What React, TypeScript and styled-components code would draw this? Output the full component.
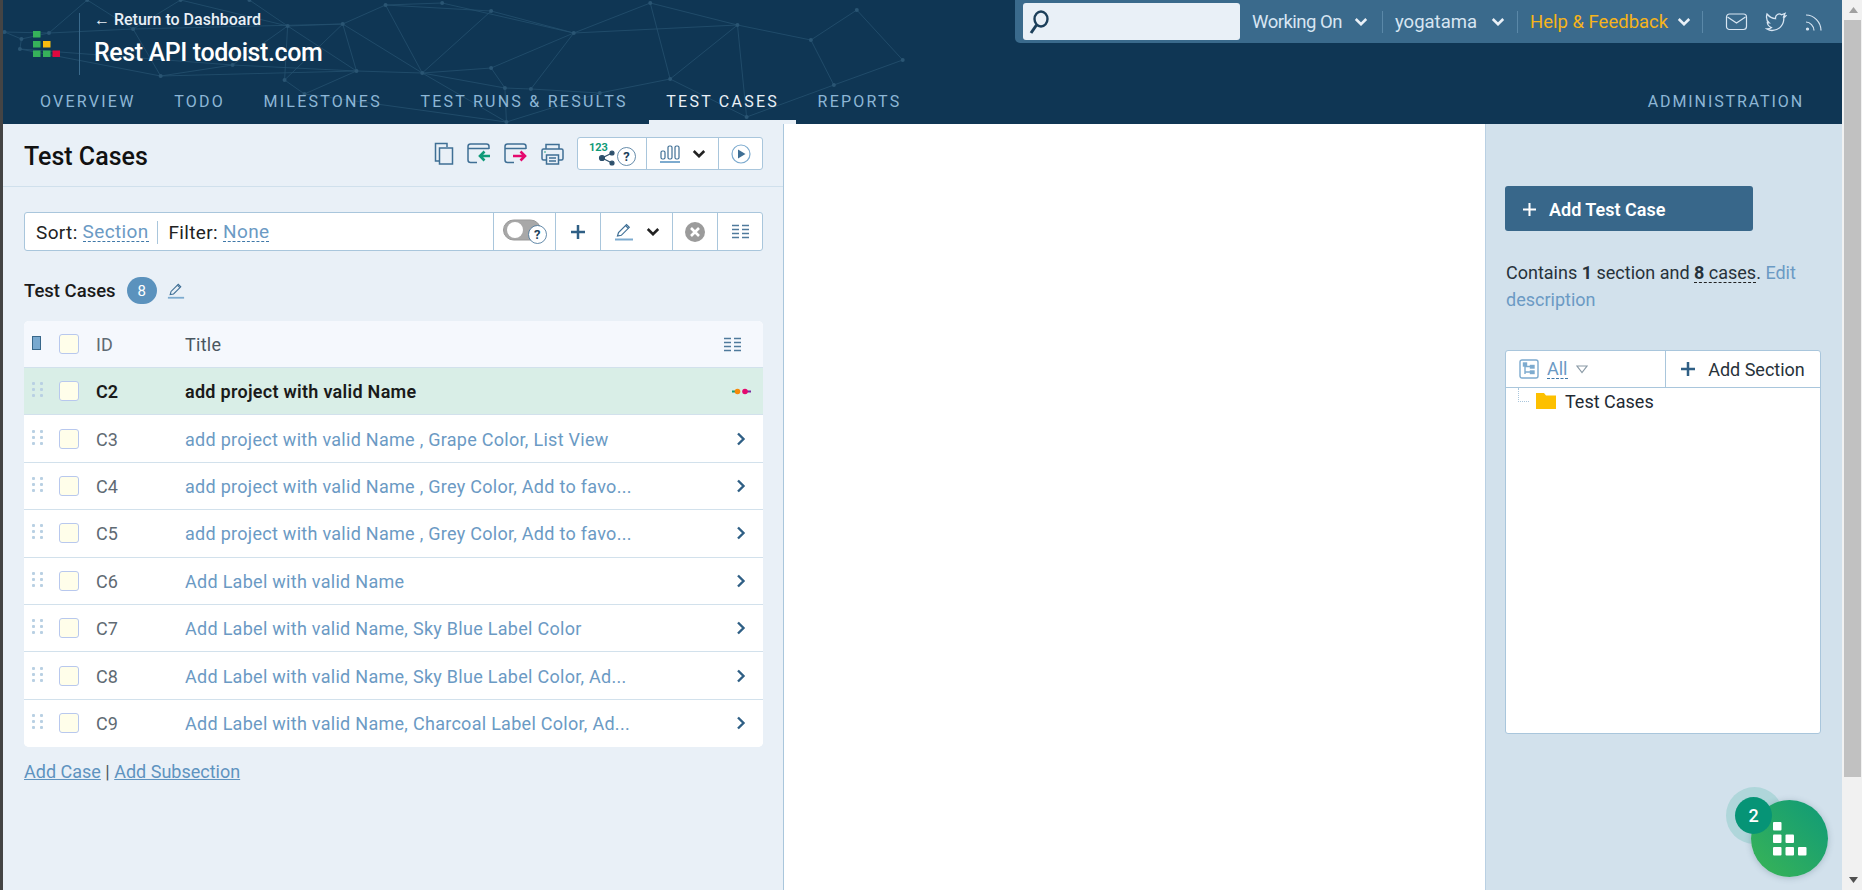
import React from "react";
import styled, { createGlobalStyle } from "styled-components";

const GlobalStyle = createGlobalStyle`
  html, body { margin: 0; padding: 0; height: 100%; overflow: hidden; }
  body { font-family: Roboto, "Liberation Sans", sans-serif; color: #1a1a1a; }
  #root { height: 100%; }
  * { box-sizing: border-box; }
`;

const Shell = styled.div`
  display: flex;
  width: 1862px;
  height: 890px;
  overflow: hidden;
`;
const WindowEdge = styled.div`
  width: 3px;
  background: #444;
  flex: none;
`;
const Page = styled.div`
  flex: 1;
  display: flex;
  flex-direction: column;
  min-width: 0;
`;
const Header = styled.header`
  position: relative;
  height: 124px;
  flex: none;
  background: #0f3654;
  display: flex;
  flex-direction: column;
  overflow: hidden;
`;
const Network = styled.svg`
  position: absolute;
  left: -3px;
  top: 0;
  pointer-events: none;
`;
const HeaderTop = styled.div`
  position: relative;
  height: 83px;
  display: flex;
  align-items: flex-start;
  justify-content: space-between;
`;
const Brand = styled.div`
  display: flex;
  align-items: center;
  padding: 13px 0 0 30px;
`;
const BrandText = styled.div`
  border-left: 1px solid #3a6a8c;
  margin-left: 19px;
  padding: 0 0 0 14px;
  height: 62px;
  color: #fff;
`;
const BackLink = styled.div`
  font-size: 16px;
  font-weight: 500;
  line-height: 18px;
  margin-top: -2px;
  color: #e9f0f7;
  white-space: nowrap;
`;
const ProjectTitle = styled.div`
  font-size: 25px;
  font-weight: 500;
  line-height: 28px;
  margin-top: 10px;
  letter-spacing: -0.4px;
  white-space: nowrap;
`;
const UtilityBar = styled.div`
  width: 827px;
  height: 43px;
  background: #3a6a8c;
  border-bottom-left-radius: 5px;
  display: flex;
  align-items: center;
  padding: 0 0 0 8px;
  font-size: 18.5px;
  color: #d7e5f2;
`;
const SearchBox = styled.div`
  width: 217px;
  height: 37px;
  flex: none;
  background: #e9f0f7;
  border-radius: 3px;
  display: flex;
  align-items: center;
  padding-left: 5px;
  margin-right: 6px;
`;
const UtilityItem = styled.div<{ $gold?: boolean; $width: number; $pl: number; $pr: number; $tight?: boolean }>`
  width: ${(p) => p.$width}px;
  flex: none;
  height: 22px;
  line-height: 20px;
  display: flex;
  align-items: center;
  justify-content: space-between;
  white-space: nowrap;
  padding: 0 ${(p) => p.$pr}px 0 ${(p) => p.$pl}px;
  color: ${(p) => (p.$gold ? "#f6b41a" : "#d7e5f2")};
  letter-spacing: ${(p) => (p.$tight ? "-0.5px" : "0")};
  border-right: 1px solid #5a88a8;
`;
const SocialIcons = styled.div`
  display: flex;
  align-items: center;
  gap: 17px;
  margin-left: 22px;
`;
const TabRow = styled.nav`
  position: relative;
  flex: 1;
  display: flex;
  padding-left: 20px;
`;
const Tab = styled.div<{ $active?: boolean; $right?: boolean }>`
  height: 41px;
  padding: 9px 17px 0;
  margin-left: ${(p) => (p.$right ? "auto" : "0")};
  margin-right: ${(p) => (p.$right ? "21px" : "4.5px")};
  font-size: 16px;
  line-height: 20px;
  letter-spacing: ${(p) => (p.$right ? "1.9px" : "2.25px")};
  white-space: nowrap;
  color: ${(p) => (p.$active ? "#e9f0f7" : "#8db6d6")};
  border-bottom: 4px solid ${(p) => (p.$active ? "#e9f0f7" : "transparent")};
`;
const Body = styled.div`
  flex: 1;
  display: flex;
  min-height: 0;
`;
const LeftPane = styled.section`
  width: 781px;
  flex: none;
  background: #e9f0f7;
  border-right: 1px solid #a9c6dc;
`;
const PaneHead = styled.div`
  height: 63px;
  border-bottom: 1px solid #d0e0ec;
  display: flex;
  align-items: center;
  justify-content: space-between;
  padding: 0 20px 0 21px;
`;
const PaneTitle = styled.h1`
  margin: 2px 0 0;
  font-size: 25px;
  font-weight: 500;
  color: #111;
`;
const HeadTools = styled.div`
  display: flex;
  align-items: center;
  gap: 13px;
  margin-top: -3px;
`;
const ToolGroup = styled.div`
  display: flex;
  height: 33px;
  background: #fff;
  border: 1px solid #a9c6dc;
  border-radius: 3px;
`;
const ToolCell = styled.div<{ $w: number }>`
  width: ${(p) => p.$w}px;
  display: flex;
  align-items: center;
  justify-content: center;
  gap: 12px;
  border-left: 1px solid #a9c6dc;
  &:first-child { border-left: none; }
`;
const ShareGroup = styled.span`
  display: flex;
  align-items: flex-end;
`;
const PaneBody = styled.div`
  padding: 25px 20px 0 21px;
`;
const FilterBar = styled.div`
  height: 39px;
  background: #fff;
  border: 1px solid #a9c6dc;
  border-radius: 3px;
  display: flex;
  align-items: stretch;
  font-size: 19px;
  letter-spacing: 0.35px;
`;
const FilterText = styled.div`
  flex: 1;
  display: flex;
  align-items: center;
  padding: 1px 0 0 11px;
  color: #222;
`;
const FilterDivider = styled.span`
  width: 1px;
  height: 23px;
  background: #a9c6dc;
  margin: 0 11px 0 8px;
`;
const Dashed = styled.span<{ $dark?: boolean }>`
  color: ${(p) => (p.$dark ? "inherit" : "#6b9ac4")};
  border-bottom: 1px dashed ${(p) => (p.$dark ? "#222" : "#3f78a8")};
  line-height: 18px;
  display: inline-block;
`;
const FilterValue = styled(Dashed)`
  margin-left: 5px;
`;
const FilterCell = styled.div<{ $w: number }>`
  width: ${(p) => p.$w}px;
  display: flex;
  align-items: center;
  justify-content: center;
  gap: 12px;
  border-left: 1px solid #a9c6dc;
`;
const SectionHead = styled.div`
  display: flex;
  align-items: center;
  margin-top: 26px;
  height: 27px;
  font-size: 18.5px;
  font-weight: 500;
`;
const CountBadge = styled.span`
  width: 30px;
  height: 27px;
  border-radius: 14px;
  background: #5b92bd;
  color: #fff;
  font-size: 15px;
  font-weight: 400;
  display: flex;
  align-items: center;
  justify-content: center;
  margin: 0 10px 0 11px;
`;
const Table = styled.div`
  margin-top: 17px;
  border-radius: 5px;
  overflow: hidden;
  background: #fff;
`;
const Row = styled.div<{ $kind?: "head" | "current" }>`
  height: ${(p) => (p.$kind === "head" ? "47px" : "47.4px")};
  display: grid;
  grid-template-columns: 35px 37px 89px 1fr 44px;
  align-items: center;
  border-bottom: 1px solid #d2e1ec;
  background: ${(p) => (p.$kind === "head" ? "#f5f8fd" : p.$kind === "current" ? "#d9eee7" : "#fff")};
  &:last-child { border-bottom: none; }
`;
const Grip = styled.div`
  display: grid;
  grid-template-columns: 3px 3px;
  gap: 3px 5px;
  margin: -3px 0 0 8px;
  width: 11px;
  & > i { width: 3px; height: 3px; background: #b9d0e3; border-radius: 1px; }
`;
const SelectCell = styled.div`
  display: flex;
  padding-left: 8px;
  margin-top: -3px;
`;
const Check = styled.span`
  width: 20px;
  height: 20px;
  border: 1px solid #b8c8ee;
  border-radius: 3px;
  background: #fffeea;
  display: block;
`;
const IdCell = styled.div<{ $strong?: boolean }>`
  font-size: 18px;
  padding-top: 1px;
  color: ${(p) => (p.$strong ? "#1a1a1a" : "#5f6a73")};
  font-weight: ${(p) => (p.$strong ? 600 : 400)};
`;
const TitleCell = styled.div<{ $strong?: boolean; $head?: boolean }>`
  font-size: 18px;
  padding-top: 1px;
  white-space: nowrap;
  color: ${(p) => (p.$strong ? "#1a1a1a" : p.$head ? "#4a5660" : "#6b9ac4")};
  font-weight: ${(p) => (p.$strong ? 600 : 400)};
  letter-spacing: 0.28px;
`;
const EndCell = styled.div<{ $shift?: number }>`
  display: flex;
  justify-content: center;
  padding-right: ${(p) => p.$shift ?? 0}px;
`;
const FootLinks = styled.div`
  margin-top: 14px;
  font-size: 18px;
  color: #4f5a63;
  & > a { color: #5e93bf; text-decoration: underline; }
`;
const Center = styled.div`
  width: 701px;
  flex: none;
  background: #fff;
`;
const RightPane = styled.aside`
  flex: 1;
  background: #d2e1ec;
  padding: 62px 20px 0 19px;
  border-left: 1px solid #b9d0e3;
  position: relative;
`;
const AddButton = styled.div`
  width: 248px;
  height: 45px;
  background: #38678a;
  border-radius: 3px;
  display: flex;
  align-items: center;
  padding: 2px 0 0 18px;
  gap: 13px;
  color: #fff;
  font-size: 18px;
  font-weight: 600;
`;
const Summary = styled.p`
  margin: 28px 0 0 1px;
  font-size: 18px;
  line-height: 27px;
  color: #27323a;
  & > b { font-weight: 700; }
  & > a { color: #6b9ac4; }
`;
const TreeBox = styled.div`
  width: 316px;
  height: 384px;
  margin-top: 37px;
  background: #fff;
  border: 1px solid #a9c6dc;
  border-radius: 3px;
`;
const TreeHead = styled.div`
  height: 37px;
  border-bottom: 1px solid #a9c6dc;
  display: flex;
  font-size: 18px;
`;
const TreeFilter = styled.div`
  width: 160px;
  border-right: 1px solid #a9c6dc;
  display: flex;
  align-items: center;
  padding-left: 13px;
  gap: 8px;
`;
const TreeAdd = styled.div`
  flex: 1;
  display: flex;
  align-items: center;
  justify-content: center;
  gap: 13px;
  color: #27323a;
  white-space: nowrap;
`;
const TreeRow = styled.div`
  display: flex;
  align-items: center;
  padding-left: 11px;
  height: 26px;
  font-size: 18px;
  color: #1f2a33;
`;
const TreeElbow = styled.span`
  width: 11px;
  height: 14px;
  margin: -12px 7px 0 1px;
  border-left: 1px dotted #a9c6dc;
  border-bottom: 1px dotted #a9c6dc;
`;
const TreeLabel = styled.span`
  margin-left: 9px;
`;
const Fab = styled.div`
  position: absolute;
  left: 265px;
  top: 676px;
  width: 77px;
  height: 77px;
  border-radius: 50%;
  background: linear-gradient(225deg, #0f9a78, #3ab455);
  box-shadow: 0 1px 6px rgba(60, 90, 110, 0.3);
  display: flex;
  align-items: center;
  justify-content: center;
`;
const FabHalo = styled.div`
  position: absolute;
  left: 240px;
  top: 663px;
  width: 57px;
  height: 57px;
  border-radius: 50%;
  background: #afd6da;
`;
const FabCount = styled.div`
  position: absolute;
  left: 249px;
  top: 673px;
  width: 37px;
  height: 37px;
  border-radius: 50%;
  background: #069476;
  color: #fff;
  font-size: 18px;
  font-weight: 500;
  display: flex;
  align-items: center;
  justify-content: center;
`;
const Scrollbar = styled.div`
  width: 20px;
  flex: none;
  background: #f1f1f1;
  display: flex;
  flex-direction: column;
  align-items: flex-end;
`;
const ScrollArrow = styled.div`
  height: 20px;
  width: 18px;
  display: flex;
  align-items: center;
  justify-content: center;
`;
const ScrollThumb = styled.div`
  width: 17px;
  height: 757px;
  margin-right: 1px;
  background: #c1c1c1;
`;
const ScrollTrack = styled.div`
  flex: 1;
`;

const nodes: [number, number][] = [
  [3, 32], [57, 0], [118, 0], [163, 0], [14, 39], [13, 49], [32, 33], [87, 29], [188, 26], [224, 24],
  [252, 5], [289, 3], [321, 11], [375, 33], [425, 3], [482, 25], [105, 76], [152, 65], [233, 71],
  [186, 80], [276, 73], [321, 68], [330, 88], [347, 89], [392, 93], [438, 79], [199, 94], [331, 122],
  [488, 117], [530, 40], [560, 10], [545, 85], [590, 60],
];
const edges: [number, number][] = [
  [0, 6], [0, 4], [4, 5], [4, 6], [5, 16], [6, 7], [7, 2], [7, 1], [1, 6], [2, 8], [3, 8], [8, 9], [7, 9],
  [9, 10], [10, 12], [10, 11], [11, 13], [12, 13], [13, 14], [14, 15], [13, 15], [9, 19], [8, 19], [19, 26],
  [16, 18], [17, 18], [16, 17], [18, 9], [18, 8], [17, 8], [18, 20], [20, 12], [20, 9], [20, 10], [20, 21],
  [21, 13], [21, 22], [22, 23], [22, 20], [23, 24], [24, 25], [25, 15], [15, 28], [25, 28], [13, 23], [14, 25],
  [24, 27], [22, 27], [20, 27], [18, 26], [26, 27], [15, 29], [29, 30], [29, 31], [31, 32], [30, 32], [28, 31],
  [5, 17], [16, 7],
];
const netX = 1.53;

const NetworkArt = () => (
  <Network width="960" height="124" viewBox="0 0 960 124">
    {edges.map(([a, b], i) => (
      <line key={i} x1={nodes[a][0] * netX} y1={nodes[a][1]} x2={nodes[b][0] * netX} y2={nodes[b][1]} stroke="#24506f" strokeWidth="0.8" />
    ))}
    {nodes.map(([x, y], i) => (
      <circle key={i} cx={x * netX} cy={y} r="2" fill="#2a5573" />
    ))}
  </Network>
);

const Logo = () => (
  <svg width="27" height="26" viewBox="0 0 27 26">
    <rect x="0" y="0" width="7.500" height="6.500" fill="#36b15a" />
    <rect x="0" y="10" width="7.500" height="6.500" fill="#36b15a" />
    <rect x="10" y="10" width="7.500" height="6.500" fill="#f8bd10" />
    <rect x="0" y="19.500" width="7.500" height="6.500" fill="#36b15a" />
    <rect x="10" y="19.500" width="7.500" height="6.500" fill="#36b15a" />
    <rect x="19.500" y="19.500" width="7.500" height="6.500" fill="#e0083f" />
  </svg>
);

const Chevron = ({ color = "#e9f0f7", size = 14 }: { color?: string; size?: number }) => (
  <svg width={size} height={size * 0.7} viewBox="0 0 12 8" fill="none">
    <path d="M1.500 1.500 6 6l4.500-4.500" stroke={color} strokeWidth="2.200" />
  </svg>
);

const SearchIcon = () => (
  <svg width="24" height="28" viewBox="0 0 24 28" fill="none" stroke="#1c3f5a" strokeWidth="2.400">
    <ellipse cx="13" cy="11" rx="6.500" ry="7.500" />
    <path d="M8.500 17 3 25" strokeWidth="3" />
  </svg>
);

const MailIcon = () => (
  <svg width="23" height="18" viewBox="0 0 22 18" fill="none" stroke="#d7e5f2" strokeWidth="1.200">
    <rect x="1" y="1" width="20" height="15.500" rx="3" />
    <path d="M2 4l9 6 9-6" />
  </svg>
);
const TwitterIcon = () => (
  <svg width="22" height="20" viewBox="0 0 22 20" fill="none" stroke="#d7e5f2" strokeWidth="1.300">
    <path d="M2 2c2.500 3 5 4.500 8.500 4.700C10 3 14 .5 16.500 2.800L20 1.500l-1.300 3 2-.5-1.900 2C19 13 14 18.500 7 18.500c-2 0-3.500-.5-5-1.500 2 0 3.500-.5 4.500-1.500C4 14.500 2.500 13 2.300 10.500l1.700.2C2 9 1 5.500 2 2z" />
  </svg>
);
const RssIcon = () => (
  <svg width="20" height="20" viewBox="0 0 20 20" fill="none" stroke="#d7e5f2" strokeWidth="1.200">
    <circle cx="3.500" cy="17" r="1" fill="#d7e5f2" />
    <path d="M2 10c4 0 8 4 8 8.500M2 3c8 0 15 7 15 15.500" />
  </svg>
);
const CopyIcon = () => (
  <svg width="20" height="23" viewBox="0 0 20 23" fill="none" stroke="#3f6f95" strokeWidth="1.500">
    <path d="M5 19H1.500V1.500H13V5" />
    <rect x="5.500" y="6" width="13" height="16" />
  </svg>
);
const TransferIcon = ({ color, dir }: { color: string; dir: "in" | "out" }) => (
  <svg width="24" height="21" viewBox="0 0 24 21" fill="none">
    <path d="M22 6V3.500C22 2 21 1 19.500 1h-16C2 1 1 2 1 3.500V17c0 1.500 1 2.500 2.500 2.500H10M1 5.500h21" stroke="#3f6f95" strokeWidth="1.500" />
    {dir === "in" ? (
      <path d="M23 13H13M17.500 8.500 13 13l4.500 4.500" stroke={color} strokeWidth="2.600" />
    ) : (
      <path d="M9 13h12M16.500 8.500 21 13l-4.500 4.500" stroke={color} strokeWidth="2.600" />
    )}
  </svg>
);
const PrinterIcon = () => (
  <svg width="23" height="22" viewBox="0 0 23 22" fill="none" stroke="#3f6f95" strokeWidth="1.500">
    <path d="M5 6V1.500h13V6" />
    <path d="M5 17H2.500C1.500 17 1 16.500 1 15.500v-8C1 6.500 1.500 6 2.500 6h18c1 0 1.500.5 1.500 1.500v8c0 1-.5 1.500-1.500 1.500H18" />
    <rect x="5.500" y="12" width="12" height="9" />
    <path d="M8 15h7M8 18h7" />
    <circle cx="4" cy="9" r="0.800" fill="#0f9a78" stroke="none" />
  </svg>
);
const HelpDot = () => (
  <svg width="19" height="19" viewBox="0 0 19 19">
    <circle cx="9.500" cy="9.500" r="9" fill="#fff" stroke="#3f6f95" strokeWidth="0.800" />
    <text x="9.500" y="14" textAnchor="middle" fontSize="13" fontWeight="700" fontFamily="Roboto, sans-serif" fill="#1c3f5a">?</text>
  </svg>
);
const ShareIcon = () => (
  <svg width="28" height="24" viewBox="0 0 28 24">
    <text x="0" y="9" fontSize="11" fontWeight="700" fontFamily="Roboto, sans-serif" fill="#0f9a78">123</text>
    <g fill="#2d4f6b" stroke="#2d4f6b" strokeWidth="1.200">
      <circle cx="13" cy="16" r="2.500" />
      <circle cx="23" cy="11" r="2" />
      <circle cx="23" cy="21" r="2" />
      <path d="M13 16 23 11M13 16l10 5" />
    </g>
  </svg>
);
const BarsIcon = () => (
  <svg width="20" height="20" viewBox="0 0 20 20" fill="none" stroke="#3f6f95" strokeWidth="1.200">
    <rect x="1" y="7" width="4" height="8" rx="1.500" />
    <rect x="8" y="2" width="4" height="13" rx="1.500" />
    <rect x="15" y="2" width="4" height="13" rx="1.500" />
    <path d="M0 18h20" stroke="#7dabcf" strokeWidth="2" />
  </svg>
);
const PlayIcon = () => (
  <svg width="20" height="20" viewBox="0 0 20 20">
    <circle cx="10" cy="10" r="9" fill="none" stroke="#7dabcf" strokeWidth="1.200" />
    <path d="M7 5.500 14.500 10 7 14.500z" fill="#3f6f95" />
  </svg>
);
const ToggleIcon = () => (
  <svg width="44" height="25" viewBox="0 0 44 25">
    <rect x="0.500" y="1" width="37" height="20" rx="10" fill="#a8a8a8" stroke="#999" />
    <circle cx="12" cy="11" r="8" fill="#fff" />
    <g transform="translate(25 6)">
      <circle cx="9.500" cy="9.500" r="9" fill="#fff" stroke="#3f6f95" strokeWidth="0.800" />
      <text x="9.500" y="14" textAnchor="middle" fontSize="13" fontWeight="700" fontFamily="Roboto, sans-serif" fill="#1c3f5a">?</text>
    </g>
  </svg>
);
const PlusIcon = ({ color = "#2f5f85", size = 14, w = 2.500 }: { color?: string; size?: number; w?: number }) => (
  <svg width={size} height={size} viewBox="0 0 14 14">
    <path d="M7 0v14M0 7h14" stroke={color} strokeWidth={w} />
  </svg>
);
const PencilIcon = ({ size = 20 }: { size?: number }) => (
  <svg width={size} height={size} viewBox="0 0 20 20" fill="none">
    <path d="M3.500 14 4.500 10.500 12.500 2.500l2.800 2.800-8 8z" stroke="#3f6f95" strokeWidth="1.200" />
    <path d="M11.500 3.500l2.800 2.800" stroke="#3f6f95" strokeWidth="1.200" />
    <path d="M1 17.500h18" stroke="#7dabcf" strokeWidth="2" />
  </svg>
);
const ClearIcon = () => (
  <svg width="20" height="20" viewBox="0 0 20 20">
    <circle cx="10" cy="10" r="10" fill="#9b9b9b" />
    <path d="M6 6l8 8M14 6l-8 8" stroke="#fff" strokeWidth="2.600" />
  </svg>
);
const ColumnsIcon = () => (
  <svg width="17" height="15" viewBox="0 0 17 15">
    <path d="M0 1.500h7M10 1.500h7M0 5.500h7M10 5.500h7M0 9.500h7M10 9.500h7M0 13.500h7M10 13.500h7" stroke="#4f7a9c" strokeWidth="1.300" />
  </svg>
);
const RowArrow = () => (
  <svg width="10" height="14" viewBox="0 0 10 14" fill="none">
    <path d="M2 1.500 7.500 7 2 12.500" stroke="#2f5f85" strokeWidth="2.400" />
  </svg>
);
const StatusDots = () => (
  <svg width="19" height="7" viewBox="0 0 19 7">
    <rect x="0" y="2.500" width="5" height="2" fill="#0f9a78" />
    <rect x="14" y="2.500" width="5" height="2" fill="#7a2aa0" />
    <circle cx="5.500" cy="3.500" r="2.800" fill="#f58a0b" />
    <circle cx="13" cy="3.500" r="2.800" fill="#e5096e" />
  </svg>
);
const SelectColumnIcon = () => (
  <svg width="9" height="14" viewBox="0 0 9 14">
    <rect x="0.500" y="0.500" width="8" height="13" fill="#79a9cf" stroke="#38678a" />
  </svg>
);
const TreeFilterIcon = () => (
  <svg width="20" height="20" viewBox="0 0 20 20" fill="none" stroke="#7dabcf" strokeWidth="1.400">
    <rect x="1" y="1" width="18" height="18" rx="2" />
    <path d="M6 5v10M6 7.500h5M6 13h5" />
    <rect x="4.500" y="4" width="3" height="3" fill="#7dabcf" />
    <rect x="11.500" y="6.500" width="3.500" height="2.500" fill="#7dabcf" />
    <rect x="11.500" y="12" width="3.500" height="2.500" fill="#7dabcf" />
  </svg>
);
const CaretDown = () => (
  <svg width="12" height="9" viewBox="0 0 12 9" fill="none">
    <path d="M1 1h10L6 7.500z" stroke="#8a9aa6" strokeWidth="1.200" />
  </svg>
);
const FolderIcon = () => (
  <svg width="20" height="16" viewBox="0 0 20 16">
    <path d="M0 0h8l2 2.500h10V16H0z" fill="#fdc000" />
  </svg>
);
const FabGrid = () => (
  <svg width="34" height="34" viewBox="0 0 34 34">
    {[[0, 0], [0, 12.500], [12.500, 12.500], [0, 25], [12.500, 25], [25, 25]].map(([x, y], i) => (
      <rect key={i} x={x} y={y} width="8.500" height="8.500" rx="1" fill="#fff" />
    ))}
  </svg>
);

const tabs = ["OVERVIEW", "TODO", "MILESTONES", "TEST RUNS & RESULTS", "TEST CASES", "REPORTS"];
const cases = [
  { id: "C2", title: "add project with valid Name", current: true },
  { id: "C3", title: "add project with valid Name , Grape Color, List View" },
  { id: "C4", title: "add project with valid Name , Grey Color, Add to favo..." },
  { id: "C5", title: "add project with valid Name , Grey Color, Add to favo..." },
  { id: "C6", title: "Add Label with valid Name" },
  { id: "C7", title: "Add Label with valid Name, Sky Blue Label Color" },
  { id: "C8", title: "Add Label with valid Name, Sky Blue Label Color, Ad..." },
  { id: "C9", title: "Add Label with valid Name, Charcoal Label Color, Ad..." },
];

export default function App() {
  return (
    <Shell>
      <GlobalStyle />
      <WindowEdge />
      <Page>
        <Header>
          <NetworkArt />
          <HeaderTop>
            <Brand>
              <Logo />
              <BrandText>
                <BackLink>← Return to Dashboard</BackLink>
                <ProjectTitle>Rest API todoist.com</ProjectTitle>
              </BrandText>
            </Brand>
            <UtilityBar>
              <SearchBox>
                <SearchIcon />
              </SearchBox>
              <UtilityItem $width={137} $pl={6} $pr={14} $tight>
                Working On <Chevron />
              </UtilityItem>
              <UtilityItem $width={135} $pl={12} $pr={12}>
                yogatama <Chevron />
              </UtilityItem>
              <UtilityItem $width={185} $pl={12} $pr={11} $gold>
                Help &amp; Feedback <Chevron />
              </UtilityItem>
              <SocialIcons>
                <MailIcon />
                <TwitterIcon />
                <RssIcon />
              </SocialIcons>
            </UtilityBar>
          </HeaderTop>
          <TabRow>
            {tabs.map((t) => (
              <Tab key={t} $active={t === "TEST CASES"}>
                {t}
              </Tab>
            ))}
            <Tab $right>ADMINISTRATION</Tab>
          </TabRow>
        </Header>
        <Body>
          <LeftPane>
            <PaneHead>
              <PaneTitle>Test Cases</PaneTitle>
              <HeadTools>
                <CopyIcon />
                <TransferIcon color="#0f9a78" dir="in" />
                <TransferIcon color="#e5096e" dir="out" />
                <PrinterIcon />
                <ToolGroup>
                  <ToolCell $w={68}>
                    <ShareGroup>
                      <ShareIcon />
                      <HelpDot />
                    </ShareGroup>
                  </ToolCell>
                  <ToolCell $w={72}>
                    <BarsIcon />
                    <Chevron color="#222" size={14} />
                  </ToolCell>
                  <ToolCell $w={44}>
                    <PlayIcon />
                  </ToolCell>
                </ToolGroup>
              </HeadTools>
            </PaneHead>
            <PaneBody>
              <FilterBar>
                <FilterText>
                  Sort:<FilterValue>Section</FilterValue>
                  <FilterDivider />
                  Filter:<FilterValue>None</FilterValue>
                </FilterText>
                <FilterCell $w={62}>
                  <ToggleIcon />
                </FilterCell>
                <FilterCell $w={45}>
                  <PlusIcon />
                </FilterCell>
                <FilterCell $w={72}>
                  <PencilIcon />
                  <Chevron color="#222" size={14} />
                </FilterCell>
                <FilterCell $w={45}>
                  <ClearIcon />
                </FilterCell>
                <FilterCell $w={45}>
                  <ColumnsIcon />
                </FilterCell>
              </FilterBar>
              <SectionHead>
                Test Cases
                <CountBadge>8</CountBadge>
                <PencilIcon size={18} />
              </SectionHead>
              <Table>
                <Row $kind="head">
                  <SelectCell>
                    <SelectColumnIcon />
                  </SelectCell>
                  <Check />
                  <IdCell>ID</IdCell>
                  <TitleCell $head>Title</TitleCell>
                  <EndCell $shift={18}>
                    <ColumnsIcon />
                  </EndCell>
                </Row>
                {cases.map((c) => (
                  <Row key={c.id} $kind={c.current ? "current" : undefined}>
                    <Grip>
                      <i /><i /><i /><i /><i /><i />
                    </Grip>
                    <Check />
                    <IdCell $strong={c.current}>{c.id}</IdCell>
                    <TitleCell $strong={c.current}>{c.title}</TitleCell>
                    <EndCell>{c.current ? <StatusDots /> : <RowArrow />}</EndCell>
                  </Row>
                ))}
              </Table>
              <FootLinks>
                <a>Add Case</a> | <a>Add Subsection</a>
              </FootLinks>
            </PaneBody>
          </LeftPane>
          <Center />
          <RightPane>
            <AddButton>
              <PlusIcon color="#fff" size={13} w={2.200} />
              Add Test Case
            </AddButton>
            <Summary>
              Contains <b>1</b> section and <Dashed $dark><b>8</b> cases</Dashed>. <a>Edit description</a>
            </Summary>
            <TreeBox>
              <TreeHead>
                <TreeFilter>
                  <TreeFilterIcon />
                  <Dashed>All</Dashed>
                  <CaretDown />
                </TreeFilter>
                <TreeAdd>
                  <PlusIcon size={14} />
                  Add Section
                </TreeAdd>
              </TreeHead>
              <TreeRow>
                <TreeElbow />
                <FolderIcon />
                <TreeLabel>Test Cases</TreeLabel>
              </TreeRow>
            </TreeBox>
            <FabHalo />
            <Fab>
              <FabGrid />
            </Fab>
            <FabCount>2</FabCount>
          </RightPane>
        </Body>
      </Page>
      <Scrollbar>
        <ScrollArrow>
          <svg width="9" height="6" viewBox="0 0 9 6"><path d="M4.500 0 9 6H0z" fill="#a0a0a0" /></svg>
        </ScrollArrow>
        <ScrollThumb />
        <ScrollTrack />
        <ScrollArrow>
          <svg width="9" height="6" viewBox="0 0 9 6"><path d="M4.500 6 9 0H0z" fill="#505050" /></svg>
        </ScrollArrow>
      </Scrollbar>
    </Shell>
  );
}
